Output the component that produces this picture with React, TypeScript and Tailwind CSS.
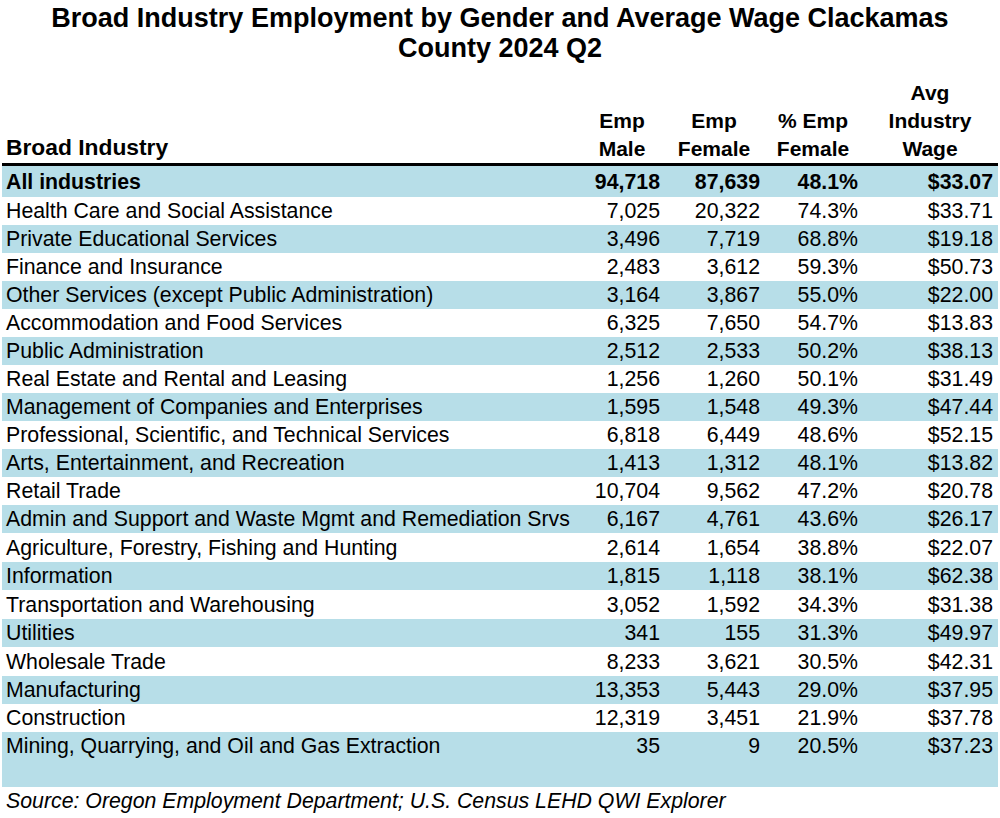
type Row = {
  industry: string;
  male: string;
  female: string;
  pct: string;
  wage: string;
};

const rows: Row[] = [
  { industry: "Health Care and Social Assistance", male: "7,025", female: "20,322", pct: "74.3%", wage: "$33.71" },
  { industry: "Private Educational Services", male: "3,496", female: "7,719", pct: "68.8%", wage: "$19.18" },
  { industry: "Finance and Insurance", male: "2,483", female: "3,612", pct: "59.3%", wage: "$50.73" },
  { industry: "Other Services (except Public Administration)", male: "3,164", female: "3,867", pct: "55.0%", wage: "$22.00" },
  { industry: "Accommodation and Food Services", male: "6,325", female: "7,650", pct: "54.7%", wage: "$13.83" },
  { industry: "Public Administration", male: "2,512", female: "2,533", pct: "50.2%", wage: "$38.13" },
  { industry: "Real Estate and Rental and Leasing", male: "1,256", female: "1,260", pct: "50.1%", wage: "$31.49" },
  { industry: "Management of Companies and Enterprises", male: "1,595", female: "1,548", pct: "49.3%", wage: "$47.44" },
  { industry: "Professional, Scientific, and Technical Services", male: "6,818", female: "6,449", pct: "48.6%", wage: "$52.15" },
  { industry: "Arts, Entertainment, and Recreation", male: "1,413", female: "1,312", pct: "48.1%", wage: "$13.82" },
  { industry: "Retail Trade", male: "10,704", female: "9,562", pct: "47.2%", wage: "$20.78" },
  { industry: "Admin and Support and Waste Mgmt and Remediation Srvs", male: "6,167", female: "4,761", pct: "43.6%", wage: "$26.17" },
  { industry: "Agriculture, Forestry, Fishing and Hunting", male: "2,614", female: "1,654", pct: "38.8%", wage: "$22.07" },
  { industry: "Information", male: "1,815", female: "1,118", pct: "38.1%", wage: "$62.38" },
  { industry: "Transportation and Warehousing", male: "3,052", female: "1,592", pct: "34.3%", wage: "$31.38" },
  { industry: "Utilities", male: "341", female: "155", pct: "31.3%", wage: "$49.97" },
  { industry: "Wholesale Trade", male: "8,233", female: "3,621", pct: "30.5%", wage: "$42.31" },
  { industry: "Manufacturing", male: "13,353", female: "5,443", pct: "29.0%", wage: "$37.95" },
  { industry: "Construction", male: "12,319", female: "3,451", pct: "21.9%", wage: "$37.78" },
  { industry: "Mining, Quarrying, and Oil and Gas Extraction", male: "35", female: "9", pct: "20.5%", wage: "$37.23" },
];

const cols = "grid grid-cols-[1fr_84px_100px_98px_136px]";

// the lower rows of the source sheet are a touch taller
const rowHeight = (i: number) => (i >= 12 && i <= 17 && i % 2 === 0 ? "h-[29px]" : "h-[28px]");

const DataRow = ({ row, i }: { row: Row; i: number }) => (
  <div className={`${cols} ${rowHeight(i)} items-center ${i % 2 === 1 ? "bg-[#b7dee8]" : "bg-white"}`}>
    <div className="whitespace-nowrap pl-[4px]">{row.industry}</div>
    <div className="pr-[4px] text-right">{row.male}</div>
    <div className="pr-[4px] text-right">{row.female}</div>
    <div className="pr-[4px] text-right">{row.pct}</div>
    <div className="pr-[5px] text-right">{row.wage}</div>
  </div>
);

export default function App() {
  return (
    <div className="h-[818px] w-[1000px] bg-white font-['Liberation_Sans',Arial,sans-serif] text-[21.3px] leading-[28px] text-black">
      <h1 className="pt-[3px] text-center text-[27px] font-bold leading-[30px]">
        Broad Industry Employment by Gender and Average Wage Clackamas
        <br />
        County 2024 Q2
      </h1>

      <div className="mx-[2px]">
        <div className={`${cols} items-end border-b-[3px] border-black pt-[16px] text-[21px] font-bold leading-[28px]`}>
          <div className="pb-[2px] pl-[4px] text-[22.8px]">Broad Industry</div>
          <div className="text-center">
            Emp
            <br />
            Male
          </div>
          <div className="text-center">
            Emp
            <br />
            Female
          </div>
          <div className="text-center">
            % Emp
            <br />
            Female
          </div>
          <div className="text-center">
            Avg
            <br />
            Industry
            <br />
            Wage
          </div>
        </div>

        <div className={`${cols} h-[31px] items-center bg-[#b7dee8] font-bold`}>
          <div className="pl-[4px]">All industries</div>
          <div className="pr-[4px] text-right">94,718</div>
          <div className="pr-[4px] text-right">87,639</div>
          <div className="pr-[4px] text-right">48.1%</div>
          <div className="pr-[5px] text-right">$33.07</div>
        </div>

        {rows.map((row, i) => (
          <DataRow key={row.industry} row={row} i={i} />
        ))}
        <div className="h-[27px] bg-[#b7dee8]" />

        <p className="pl-[4px] italic">
          Source: Oregon Employment Department; U.S. Census LEHD QWI Explorer
        </p>
      </div>
    </div>
  );
}
